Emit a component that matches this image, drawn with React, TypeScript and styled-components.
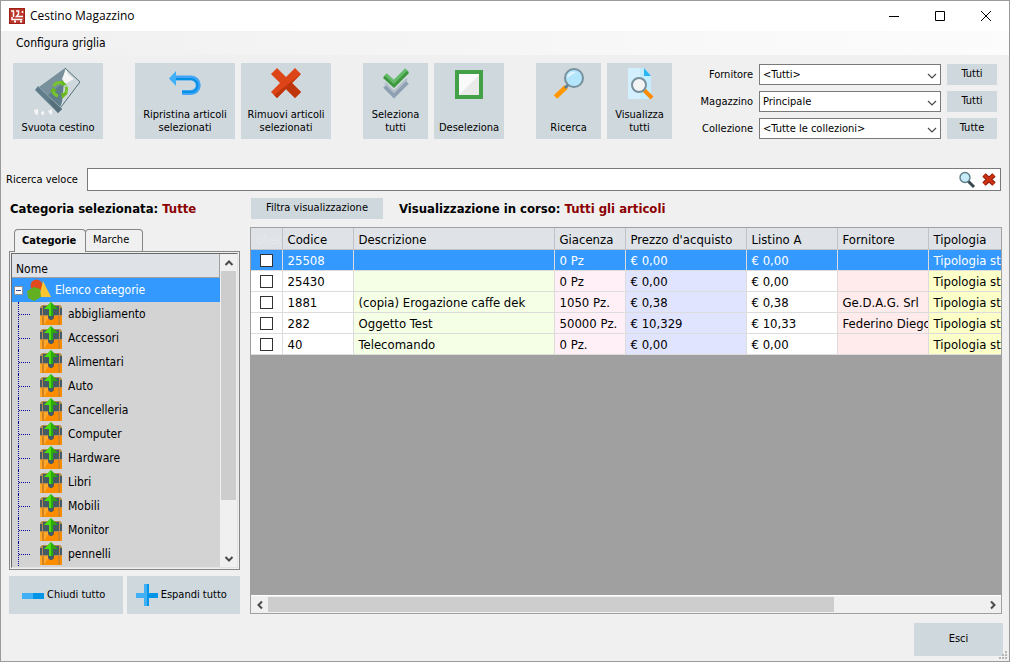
import React from "react";
import styled, { createGlobalStyle } from "styled-components";

const Global = createGlobalStyle`
  *, *::before, *::after { box-sizing: border-box; }
  body { margin: 0; background: #f0f0f0; color: #000; font-family: "DejaVu Sans Condensed", Tahoma, "DejaVu Sans", sans-serif; font-size: 11px; line-height: 14px; }
  button, input, select { font: inherit; color: inherit; border-radius: 0; margin: 0; }
`;

const Window = styled.div`
  display: flex;
  flex-direction: column;
  height: 100vh;
  min-height: 480px;
  border: 1px solid #9a9a9a;
  background: #f0f0f0;
  overflow: hidden;
  position: relative;
`;

const TitleBar = styled.header`
  display: flex;
  align-items: center;
  flex: none;
  height: 30px;
  padding-left: 8px;
  gap: 5px;
  background: #fff;
`;
const Title = styled.h1`
  flex: 1;
  margin: 0;
  font-family: "Open Sans", "Segoe UI", sans-serif;
  font-size: 12px;
  font-weight: 400;
`;
const CaptionButtons = styled.div`
  display: flex;
`;
const CaptionButton = styled.button`
  display: grid;
  place-items: center;
  width: 46px;
  height: 30px;
  padding: 0;
  border: 0;
  background: none;
`;

const MenuBar = styled.nav`
  flex: none;
  height: 24px;
  padding-left: 15px;
  background: linear-gradient(90deg, #f0f0f0, #fcfcfc);
`;
const MenuItem = styled.button`
  height: 24px;
  padding: 0;
  border: 0;
  background: none;
  font-size: 12px;
`;

const Toolbar = styled.section`
  display: flex;
  flex: none;
  align-items: flex-start;
  justify-content: space-between;
  padding: 8px 12px 0;
  height: 113px;
`;
const ToolGroups = styled.div`
  display: flex;
  gap: 32px;
`;
const ToolGroup = styled.div`
  display: flex;
  gap: 6px;
`;
const flat = `
  border: 0;
  background: #cfd8dd;
`;
const ToolButton = styled.button<{ $width: number }>`
  ${flat}
  display: flex;
  flex-direction: column;
  align-items: center;
  justify-content: space-between;
  flex: none;
  width: ${(p) => p.$width}px;
  height: 76px;
  padding: 3px 0 5px;
  line-height: 13px;
  white-space: pre-line;
  svg { flex: none; }
`;
const Filters = styled.div`
  display: grid;
  grid-template-columns: auto 182px 50px;
  grid-auto-rows: 21px;
  gap: 6px;
  align-items: center;
  padding: 1px 0 0;
`;
const FilterLabel = styled.label`
  text-align: right;
`;
const SelectBox = styled.span`
  position: relative;
  display: block;
  svg { position: absolute; right: 4px; top: 8px; pointer-events: none; }
`;
const Select = styled.select`
  appearance: none;
  display: block;
  width: 100%;
  height: 21px;
  padding: 0 20px 0 3px;
  border: 1px solid #7a7a7a;
  background: #fff;
`;
const SmallButton = styled.button`
  ${flat}
  height: 21px;
  padding: 0 0 2px;
`;

const SearchRow = styled.div`
  display: flex;
  flex: none;
  align-items: center;
  padding: 0 8px 0 5px;
  gap: 9px;
`;
const SearchBox = styled.div`
  display: flex;
  flex: 1;
  align-items: center;
  height: 23px;
  gap: 6px;
  padding-right: 4px;
  border: 1px solid #7a7a7a;
  background: #fff;
`;
const SearchInput = styled.input`
  flex: 1;
  min-width: 0;
  height: 21px;
  padding: 0 4px;
  border: 0;
  outline: 0;
  background: transparent;
`;
const IconButton = styled.button`
  display: grid;
  place-items: center;
  padding: 0;
  border: 0;
  background: none;
`;

const Main = styled.main`
  display: grid;
  grid-template-columns: 231px minmax(0, 1fr);
  grid-template-rows: 36px minmax(0, 1fr);
  column-gap: 10px;
  flex: 1;
  min-height: 0;
  padding: 0 7px 0 8px;
`;
const Heading = styled.h2`
  margin: 0;
  font-size: 13px;
  line-height: 21px;
  font-weight: 700;
  white-space: nowrap;
  span { color: #8b0000; }
`;
const HeadingCell = styled.div`
  display: flex;
  align-items: flex-start;
  gap: 16px;
  padding: 7px 1px 0;
`;
const FilterButton = styled(SmallButton)`
  width: 132px;
`;
const Column = styled.div`
  display: flex;
  flex-direction: column;
  min-height: 0;
  min-width: 0;
`;

const Tabs = styled.div`
  display: flex;
  flex: none;
  padding: 2px 5px 0;
`;
const Tab = styled.button<{ $active?: boolean }>`
  height: ${(p) => (p.$active ? 23 : 22)}px;
  margin-bottom: ${(p) => (p.$active ? -1 : 0)}px;
  margin-right: ${(p) => (p.$active ? -1 : 0)}px;
  padding: 0 7px 1px;
  width: ${(p) => (p.$active ? 72 : 58)}px;
  text-align: left;
  border: 1px solid #868686;
  border-bottom: 0;
  border-radius: 4px 4px 0 0;
  background: #f0f0f0;
  font-weight: ${(p) => (p.$active ? 700 : 400)};
  position: relative;
`;
const TreePanel = styled.div`
  display: flex;
  flex: 1;
  min-height: 0;
  border: 1px solid #868686;
  padding: 1px;
`;
const TreeInner = styled.div`
  display: flex;
  flex: 1;
  min-width: 0;
  border: 1px solid #696969;
  border-right-color: #e3e3e3;
  border-bottom-color: #e3e3e3;
`;
const Tree = styled.div`
  flex: 1;
  min-width: 0;
  overflow: hidden;
  background: #d3d3d3;
  font-size: 12px;
`;
const TreeHead = styled.div`
  height: 24px;
  padding: 8px 4px 0;
  border-right: 1px solid #a0a0a0;
  border-bottom: 1px solid #a0a0a0;
  background: #dfe3e8;
`;
const List = styled.ul`
  list-style: none;
  margin: 0;
  padding: 0;
`;
const RootRow = styled.div`
  display: flex;
  align-items: center;
  height: 24px;
  padding-left: 2px;
  gap: 4px;
  background: #3399ff;
  color: #fff;
`;
const Toggle = styled.button`
  display: grid;
  place-items: center;
  width: 9px;
  height: 9px;
  padding: 0;
  border: 1px solid #919191;
  border-radius: 1px;
  background: #fff;
  &::before { content: ""; width: 5px; height: 1px; background: #3a4a9a; }
`;
const Leaf = styled.li`
  display: flex;
  align-items: center;
  height: 24px;
  margin-left: 6px;
  gap: 5px;
  border-left: 1px dotted #0000a0;
  &::before { content: ""; width: 11px; margin-right: 4px; border-top: 1px dotted #0000a0; }
`;

const VBar = styled.div`
  display: flex;
  flex-direction: column;
  align-items: center;
  width: 17px;
  flex: none;
  background: #f0f0f0;
`;
const VTrack = styled.div`
  flex: 1;
  width: 15px;
`;
const VThumb = styled.div`
  width: 15px;
  height: 82%;
  background: #cdcdcd;
`;
const HBar = styled.div`
  display: flex;
  flex: none;
  height: 18px;
  border-top: 1px solid #fff;
  background: #f0f0f0;
`;
const HTrack = styled.div`
  flex: 1;
  padding: 1px 0;
`;
const HThumb = styled.div`
  width: 79%;
  height: 15px;
  background: #cdcdcd;
`;
const ArrowButton = styled(IconButton)`
  width: 17px;
  height: 17px;
`;

const TreeActions = styled.div`
  display: grid;
  grid-template-columns: 1fr 1fr;
  flex: none;
  gap: 4px;
  margin-top: 6px;
`;
const ActionButton = styled.button`
  ${flat}
  display: flex;
  align-items: center;
  justify-content: center;
  height: 38px;
  gap: 3px;
  padding: 0 4px 0 0;
`;

const GridPanel = styled.div`
  display: flex;
  flex-direction: column;
  flex: 1;
  min-height: 0;
  border: 1px solid #a0a0a0;
  background: #a0a0a0;
`;
const GridView = styled.div`
  flex: 1;
  min-height: 0;
  overflow: hidden;
`;
const Table = styled.table`
  width: 100%;
  table-layout: fixed;
  border-collapse: collapse;
  font-size: 13px;
  line-height: 16px;
`;
const Th = styled.th<{ $ghost?: boolean }>`
  height: 21px;
  padding: 3px 0 0 5px;
  border-right: 1px solid #bfc3c8;
  border-bottom: 1px solid #bfc3c8;
  background: #dfe3e8;
  color: ${(p) => (p.$ghost ? "#e8e8ea" : "#000")};
  text-align: left;
  font-weight: 400;
  white-space: nowrap;
  overflow: hidden;
  &:last-child { border-right: 0; }
`;
const Td = styled.td<{ $bg: string; $selected: boolean }>`
  height: 21px;
  padding: 2px 0 0 5px;
  border-right: 1px solid #dcdcdc;
  border-bottom: 1px solid #dcdcdc;
  background: ${(p) => (p.$selected ? "#3399ff" : p.$bg)};
  color: ${(p) => (p.$selected ? "#fff" : "#000")};
  white-space: nowrap;
  overflow: hidden;
  &:last-child { border-right: 0; }
`;
const Check = styled.input`
  appearance: none;
  display: block;
  width: 13px;
  height: 13px;
  margin: 0 0 0 4px;
  border: 1px solid #333;
  background: #fff;
`;

const Footer = styled.footer`
  display: flex;
  justify-content: flex-end;
  flex: none;
  padding: 9px 6px 5px;
`;
const ExitButton = styled.button`
  ${flat}
  width: 89px;
  height: 33px;
  padding: 0 0 2px;
`;
const Grip = styled.svg`
  position: absolute;
  right: 2px;
  bottom: 2px;
`;

const LogoIcon = () => (
  <svg width="16" height="16" viewBox="0 0 16 16">
    <rect width="16" height="16" fill="#9c2119" />
    <rect x="1" y="1" width="14" height="14" fill="#bb3529" />
    <path d="M2 3H5M4.500 3V9M7 3H9.500V6L7.500 8.500H14M3 9V11.500H13.500M13.500 3V5" fill="none" stroke="#fff" strokeWidth="1.500" />
    <path d="M5 12.500h2v2H5zM11 12.500h2v2h-2z" fill="#fff" />
  </svg>
);
const BinIcon = () => (
  <svg width="48" height="50" viewBox="0 0 48 50">
    <path d="M31 2 46 16 27 41 5 21z" fill="#cfd8dc" />
    <path d="M31 2 5 21 15 31 30 16z" fill="#78909c" />
    <path d="M32 3 34 8 40 13 31 18 28 13z" fill="#f5f5f5" />
    <path d="M31 2 46 16 27 41" fill="none" stroke="#546e7a" strokeWidth="1" />
    <path d="M30 16 28 36 25 44 13 30z" fill="#607d8b" />
    <path d="M4 20 28 43 24 47 1 24z" fill="#607d8b" />
    <path d="M14 34 20 35 28 43 24 47z" fill="#546e7a" />
    <path d="M5 21 26 41" stroke="#90a4ae" strokeWidth="1" />
    <path d="M19.500 20A7 7 0 0 1 29 17.500M32 20.500A7 7 0 0 1 29 29.500M24 30A7 7 0 0 1 19 24" fill="none" stroke="#76c52b" strokeWidth="3" />
    <path d="M28 14 33 19 27 20zM34 27 28 33 27 27zM16 26 19 21 23 25z" fill="#6ab81f" />
    <path d="M0 44l4-1v6l-3-1zM7 46l3-1v4H8zM14 45l4-2v6l-3-2z" fill="#f5f5f5" />
  </svg>
);
const UndoIcon = () => (
  <svg width="34" height="40" viewBox="0 0 34 40">
    <path d="M7 12h16a7 7 0 0 1 0 14.500h-9" fill="none" stroke="#42a5f5" strokeWidth="5" />
    <path d="M7 13h16a6 6 0 0 1 0 13h-9" fill="none" stroke="#0391e5" strokeWidth="2" />
    <path d="M1 12.500 8 5v15z" fill="#42b0f8" />
  </svg>
);
const CrossIcon = () => (
  <svg width="32" height="36" viewBox="0 0 32 36">
    <path d="M1 8 7 2 16 11 25 2 31 8 22 17 31 26 25 32 16 23 7 32 1 26 10 17z" fill="#dd4418" />
    <path d="M31 8 22 17 31 26 25 32 16 23 7 32 4 29z" fill="#bf360c" />
  </svg>
);
const ChecksIcon = () => (
  <svg width="28" height="36" viewBox="0 0 28 36">
    <path d="M3 20 12 29 25 16" fill="none" stroke="#90a0b4" strokeWidth="5" />
    <path d="M3 17 12 26 25 13" fill="none" stroke="#b0bec5" strokeWidth="2" />
    <path d="M3 9 12 17 25 4" fill="none" stroke="#66bb6a" strokeWidth="5" />
    <path d="M2 11 12 20 26 6" fill="none" stroke="#3d983f" strokeWidth="3" />
  </svg>
);
const SquareIcon = () => (
  <svg width="28" height="36" viewBox="0 0 28 36">
    <rect x="2" y="6" width="24" height="25" fill="#fafafa" stroke="#43a047" strokeWidth="4" />
    <path d="M24 9v20H4z" fill="#eaeaea" />
  </svg>
);
const LensIcon = () => (
  <svg width="32" height="36" viewBox="0 0 32 36">
    <path d="M2.500 31 13 21" stroke="#ff9800" strokeWidth="5" />
    <path d="M12 22 15 19" stroke="#607d8b" strokeWidth="3" />
    <circle cx="21" cy="12" r="9" fill="#b3e5fc" stroke="#78909c" strokeWidth="2" />
    <path d="M14 12a7 7 0 0 1 9-6z" fill="#dff5ff" />
  </svg>
);
const PageLensIcon = () => (
  <svg width="28" height="36" viewBox="0 0 28 36">
    <path d="M2 2H18L25 10V33H2z" fill="#c4ecff" />
    <path d="M2 2H14V33H2z" fill="#d4f0ff" />
    <path d="M18 2 25 10H18z" fill="#29b6f6" />
    <path d="M18 24 26 32" stroke="#fb8c00" strokeWidth="4" />
    <circle cx="13" cy="19" r="7" fill="#f4f4f4" stroke="#78909c" strokeWidth="2" />
  </svg>
);
const SmallLens = () => (
  <svg width="18" height="18" viewBox="0 0 18 18">
    <path d="M10 10 16 16" stroke="#37474f" strokeWidth="3" />
    <circle cx="7" cy="6.500" r="5" fill="#c5ebf8" stroke="#607d8b" strokeWidth="1.400" />
  </svg>
);
const SmallCross = () => (
  <svg width="14" height="14" viewBox="0 0 14 14">
    <path d="M2 2 12 11M12 2 2 11" stroke="#8c1c0c" strokeWidth="5" />
    <path d="M2 2 12 11M12 2 2 11" stroke="#cc3212" strokeWidth="3" />
  </svg>
);
const ShapesIcon = () => (
  <svg width="24" height="22" viewBox="0 0 24 22">
    <circle cx="9.500" cy="6.500" r="6" fill="#e04a1c" />
    <path d="M16 2 24 18 12 18z" fill="#fbc531" />
    <path d="M0 12 7 8 13 10 14 18 7 22 1 19z" fill="#62b022" />
  </svg>
);
const ChestIcon = () => (
  <svg width="24" height="24" viewBox="0 0 24 24">
    <path d="M1 5 3 3H21L23 5V23H1z" fill="#b98a4e" />
    <path d="M4 4H20V13H4zM1 6H3V13H1zM21 6H23V13H21z" fill="#455a64" />
    <path d="M1 14H23V23H1z" fill="#fb8c00" />
    <path d="M1 14H3V23H1zM5 14H11L5 23z" fill="#ffa726" />
    <path d="M4 14V23M20 14V23" stroke="#a87c46" strokeWidth="1" />
    <path d="M9 12h6v4l-2 2h-2l-2-2z" fill="#455a64" />
    <path d="M12 0 19 7H14V14H10V7H5z" fill="#2aa80c" />
    <path d="M12 0V14H10V7H5z" fill="#4be00d" />
  </svg>
);
const MinusIcon = () => (
  <svg width="22" height="22" viewBox="0 0 22 22">
    <path d="M0 9h22v6H0z" fill="#42b0f5" />
    <path d="M11 9h11v6H11z" fill="#0495e8" />
  </svg>
);
const PlusIcon = () => (
  <svg width="22" height="22" viewBox="0 0 22 22">
    <path d="M0 9H8V0h5v9h9v5H13v8H8V14H0z" fill="#42b0f5" />
    <path d="M11 0h2v9h9v5H13v8H11z" fill="#0495e8" />
  </svg>
);
const paths = { up: "M1.500 7 5 3.500 8.500 7", down: "M1.500 3 5 6.500 8.500 3", left: "M7 1.500 3.500 5 7 8.500", right: "M3 1.500 6.500 5 3 8.500" };
const Chevron = ({ dir, thin }: { dir: keyof typeof paths; thin?: boolean }) => (
  <svg width="10" height={thin ? 8 : 10} viewBox={thin ? "0 1 10 8" : "0 0 10 10"}>
    <path d={thin ? "M1 3 5 7 9 3" : paths[dir]} fill="none" stroke="#4a4a4a" strokeWidth={thin ? 1.2 : 2} />
  </svg>
);

const tools = [
  [{ label: "Svuota cestino", width: 90, Icon: BinIcon }],
  [
    { label: "Ripristina articoli\nselezionati", width: 100, Icon: UndoIcon },
    { label: "Rimuovi articoli\nselezionati", width: 90, Icon: CrossIcon },
  ],
  [
    { label: "Seleziona\ntutti", width: 65, Icon: ChecksIcon },
    { label: "Deseleziona", width: 70, Icon: SquareIcon },
  ],
  [
    { label: "Ricerca", width: 65, Icon: LensIcon },
    { label: "Visualizza\ntutti", width: 65, Icon: PageLensIcon },
  ],
];
const filters = [
  { id: "fornitore", label: "Fornitore", value: "<Tutti>", button: "Tutti" },
  { id: "magazzino", label: "Magazzino", value: "Principale", button: "Tutti" },
  { id: "collezione", label: "Collezione", value: "<Tutte le collezioni>", button: "Tutte" },
];
const categories = ["abbigliamento", "Accessori", "Alimentari", "Auto", "Cancelleria", "Computer", "Hardware", "Libri", "Mobili", "Monitor", "pennelli"];
const columns = [
  { name: "Codice", width: 71, bg: "#fff" },
  { name: "Descrizione", width: 201, bg: "#f5ffe6" },
  { name: "Giacenza", width: 71, bg: "#fff0f8" },
  { name: "Prezzo d'acquisto", width: 121, bg: "#e0e4ff" },
  { name: "Listino A", width: 91, bg: "#fff" },
  { name: "Fornitore", width: 91, bg: "#ffebeb" },
  { name: "Tipologia", width: 0, bg: "#fdffc8" },
];
const rows = [
  ["25508", "", "0 Pz", "€ 0,00", "€ 0,00", "", "Tipologia standard"],
  ["25430", "", "0 Pz", "€ 0,00", "€ 0,00", "", "Tipologia standard"],
  ["1881", "(copia) Erogazione caffe dek", "1050 Pz.", "€ 0,38", "€ 0,38", "Ge.D.A.G. Srl", "Tipologia standard"],
  ["282", "Oggetto Test", "50000 Pz.", "€ 10,329", "€ 10,33", "Federino Diego", "Tipologia standard"],
  ["40", "Telecomando", "0 Pz.", "€ 0,00", "€ 0,00", "", "Tipologia standard"],
];

export default function App() {
  return (
    <Window>
      <Global />
      <TitleBar>
        <LogoIcon />
        <Title>Cestino Magazzino</Title>
        <CaptionButtons>
          <CaptionButton aria-label="Riduci a icona">
            <svg width="10" height="10"><path d="M0 5.5H10" stroke="#000" /></svg>
          </CaptionButton>
          <CaptionButton aria-label="Ingrandisci">
            <svg width="10" height="10"><path d="M.5 .5H9.5V9.5H.5z" fill="none" stroke="#000" /></svg>
          </CaptionButton>
          <CaptionButton aria-label="Chiudi">
            <svg width="10" height="10"><path d="M0 0 10 10M10 0 0 10" stroke="#000" /></svg>
          </CaptionButton>
        </CaptionButtons>
      </TitleBar>
      <MenuBar><MenuItem>Configura griglia</MenuItem></MenuBar>
      <Toolbar>
        <ToolGroups>
          {tools.map((group, i) => (
            <ToolGroup key={i}>
              {group.map(({ label, width, Icon }) => (
                <ToolButton key={label} $width={width}><Icon />{label}</ToolButton>
              ))}
            </ToolGroup>
          ))}
        </ToolGroups>
        <Filters>
          {filters.map((f) => (
            <React.Fragment key={f.id}>
              <FilterLabel htmlFor={f.id}>{f.label}</FilterLabel>
              <SelectBox>
                <Select id={f.id}><option>{f.value}</option></Select>
                <Chevron dir="down" thin />
              </SelectBox>
              <SmallButton>{f.button}</SmallButton>
            </React.Fragment>
          ))}
        </Filters>
      </Toolbar>
      <SearchRow>
        <label htmlFor="veloce">Ricerca veloce</label>
        <SearchBox>
          <SearchInput id="veloce" />
          <IconButton aria-label="Cerca"><SmallLens /></IconButton>
          <IconButton aria-label="Cancella"><SmallCross /></IconButton>
        </SearchBox>
      </SearchRow>
      <Main>
        <HeadingCell><Heading>Categoria selezionata: <span>Tutte</span></Heading></HeadingCell>
        <HeadingCell>
          <FilterButton>Filtra visualizzazione</FilterButton>
          <Heading>Visualizzazione in corso: <span>Tutti gli articoli</span></Heading>
        </HeadingCell>
        <Column>
          <Tabs>
            <Tab $active>Categorie</Tab>
            <Tab>Marche</Tab>
          </Tabs>
          <TreePanel>
            <TreeInner>
              <Tree>
                <TreeHead>Nome</TreeHead>
                <RootRow><Toggle aria-label="Comprimi" /><ShapesIcon /><span>Elenco categorie</span></RootRow>
                <List>
                  {categories.map((c) => <Leaf key={c}><ChestIcon />{c}</Leaf>)}
                </List>
              </Tree>
              <VBar>
                <ArrowButton aria-label="Su"><Chevron dir="up" /></ArrowButton>
                <VTrack><VThumb /></VTrack>
                <ArrowButton aria-label="Giù"><Chevron dir="down" /></ArrowButton>
              </VBar>
            </TreeInner>
          </TreePanel>
          <TreeActions>
            <ActionButton><MinusIcon />Chiudi tutto</ActionButton>
            <ActionButton><PlusIcon />Espandi tutto</ActionButton>
          </TreeActions>
        </Column>
        <Column>
          <GridPanel>
            <GridView>
              <Table>
                <colgroup>
                  <col width={31} />
                  {columns.map((c) => <col key={c.name} width={c.width || undefined} />)}
                </colgroup>
                <thead>
                  <tr><Th $ghost>check</Th>{columns.map((c) => <Th key={c.name}>{c.name}</Th>)}</tr>
                </thead>
                <tbody>
                  {rows.map((r, i) => (
                    <tr key={r[0]}>
                      <Td $bg="#fff" $selected={i === 0}><Check type="checkbox" aria-label={r[0]} /></Td>
                      {r.map((v, j) => <Td key={j} $bg={columns[j].bg} $selected={i === 0}>{v}</Td>)}
                    </tr>
                  ))}
                </tbody>
              </Table>
            </GridView>
            <HBar>
              <ArrowButton aria-label="Sinistra"><Chevron dir="left" /></ArrowButton>
              <HTrack><HThumb /></HTrack>
              <ArrowButton aria-label="Destra"><Chevron dir="right" /></ArrowButton>
            </HBar>
          </GridPanel>
        </Column>
      </Main>
      <Footer><ExitButton>Esci</ExitButton></Footer>
      <Grip width="8" height="8" viewBox="0 0 8 8">
        <path d="M6 0h2v2H6zM3 3h2v2H3zM6 3h2v2H6zM0 6h2v2H0zM3 6h2v2H3zM6 6h2v2H6z" fill="#b8b8b8" />
      </Grip>
    </Window>
  );
}
